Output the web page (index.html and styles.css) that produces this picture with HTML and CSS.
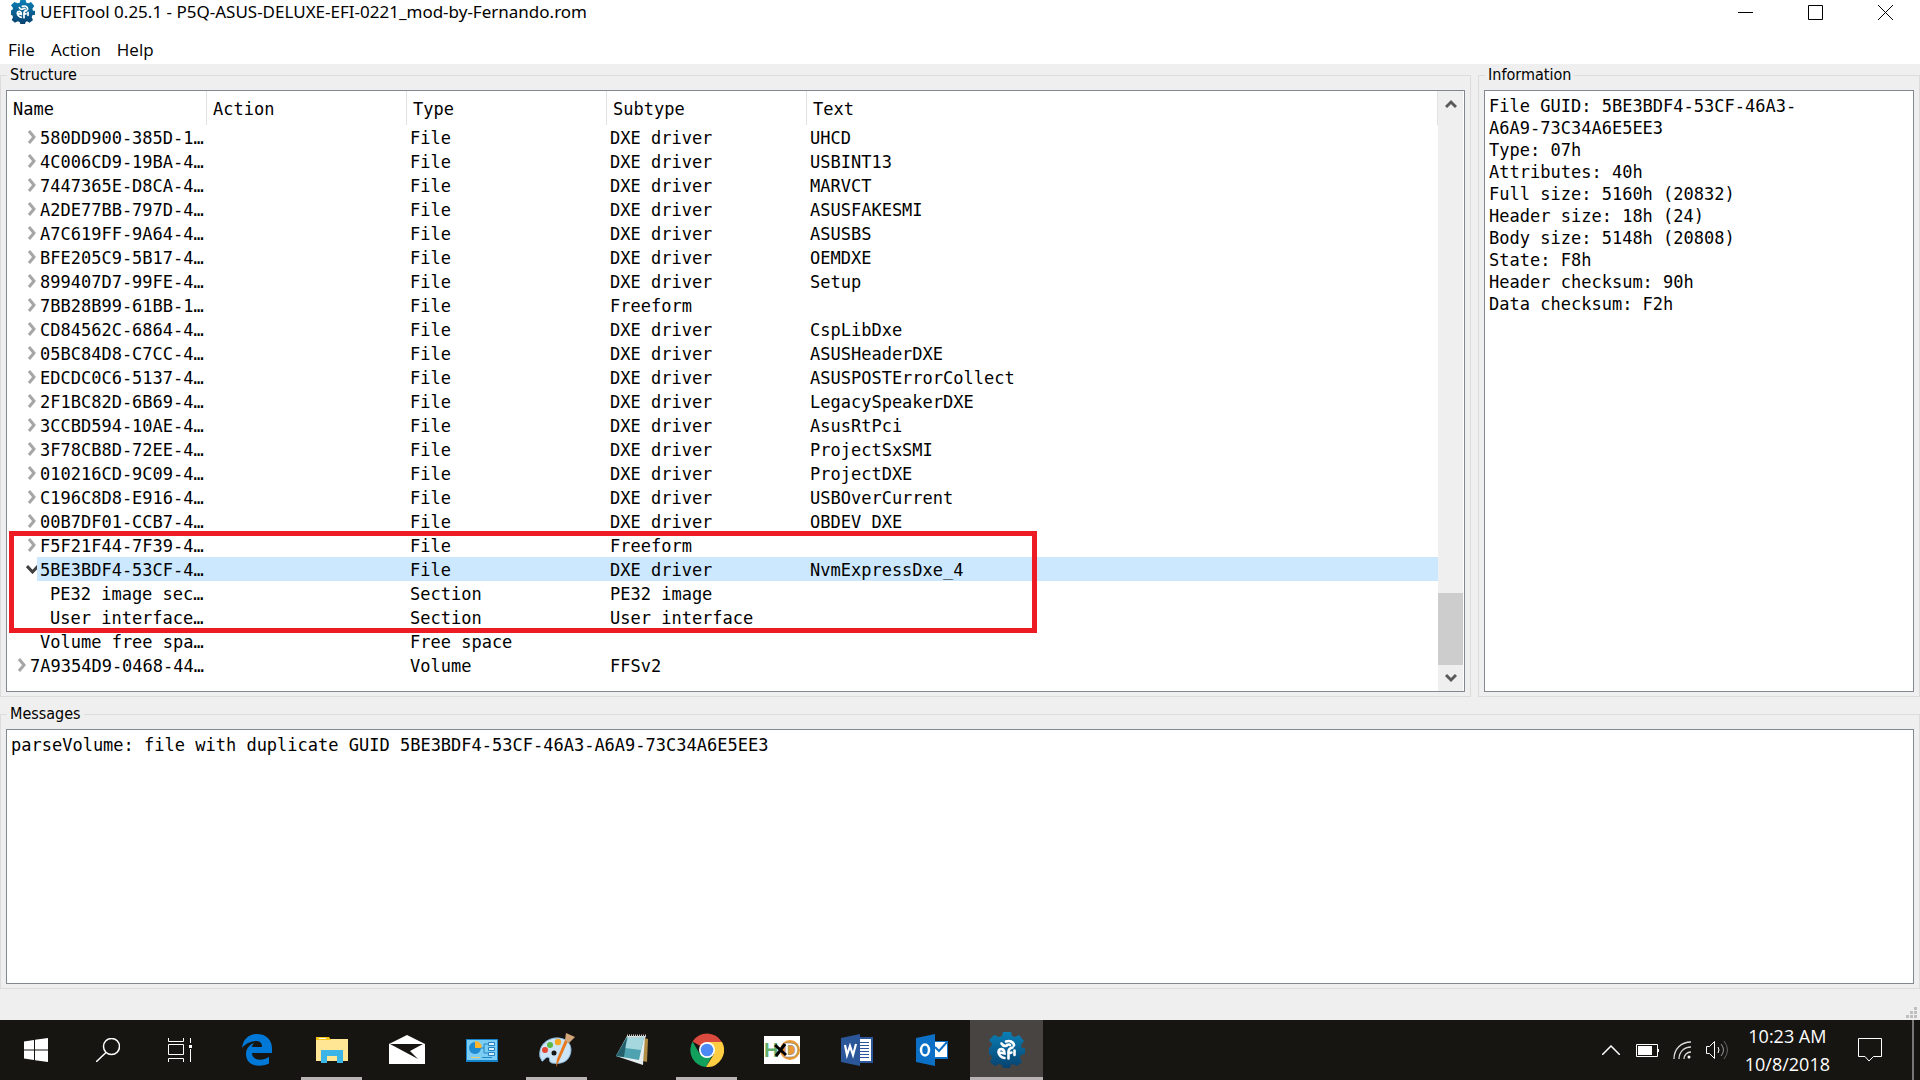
FILE: index.html
```html
<!DOCTYPE html>
<html lang="en">
<head>
<meta charset="utf-8">
<title>UEFITool 0.25.1</title>
<link rel="stylesheet" href="styles.css">
</head>
<body>
<svg class="defs" aria-hidden="true">
  <defs>
    <linearGradient id="gearFill" x1="0" y1="0" x2="0" y2="1"><stop offset="0" stop-color="#0a7fb5"/><stop offset="1" stop-color="#07426f"/></linearGradient>
    <symbol id="gear" viewBox="0 0 36 36">
      <path fill="url(#gearFill)" d="M14 0h8l1 4 3 1 4-2 5 6-3 4 1 3 3 0v6l-4 1-1 3 2 4-5 4-4-2-2 1-1 3h-7l-1-3-3-1-4 2-5-4 2-4-1-3-4-1v-6l4-1 1-3-3-4 5-5 5 2 3-1z"/>
      <path fill="none" stroke="#fff" stroke-width="2.600" stroke-linecap="round" d="M12.500 11.500q2 3.500 5.500 2M17 9.500q3-1 5 0 3 1.500 3 4M18 13q2-1 3 0M10.500 20.500l5 1q0-4-3-4.500-3 0-3 3.500 1 4.500 6 5.500M19.500 26.500v-7q0-3 4-4M19.500 21.500l3-1M25.500 18.500v4.500"/>
    </symbol>
    <symbol id="chev" viewBox="0 0 10 14"><path d="M2 1l5 6-5 6" fill="none" stroke="#a6a6a6" stroke-width="3"/></symbol>
  </defs>
</svg>

<header class="titlebar">
  <svg class="app-icon"><use href="#gear"/></svg>
  <h1 class="title">UEFITool 0.25.1 - P5Q-ASUS-DELUXE-EFI-0221_mod-by-Fernando.rom</h1>
  <div class="window-buttons">
    <button aria-label="Minimize"><svg width="15" height="15"><path d="M0 7.500h15" stroke="#000"/></svg></button>
    <button aria-label="Maximize"><svg width="15" height="15"><path d="M.5.5h14v14H.5z" fill="none" stroke="#000"/></svg></button>
    <button aria-label="Close"><svg width="15" height="15"><path d="M0 0l15 15M15 0L0 15" stroke="#000"/></svg></button>
  </div>
</header>
<nav class="menubar">
  <button>File</button><button>Action</button><button>Help</button>
</nav>

<main class="workspace">
  <fieldset class="group structure">
    <legend>Structure</legend>
    <div class="tree">
      <div class="tree-view">
        <table>
          <colgroup><col class="col-name"><col class="col"><col class="col"><col class="col"><col></colgroup>
          <thead><tr><th>Name</th><th>Action</th><th>Type</th><th>Subtype</th><th>Text</th></tr></thead>
          <tbody id="rows"></tbody>
        </table>
        <div class="marker"></div>
      </div>
      <div class="scrollbar">
        <button aria-label="Scroll up"><svg width="12" height="10"><path d="M1 8l5-5 5 5" fill="none" stroke="#5a5a5a" stroke-width="3"/></svg></button>
        <div class="track"><div class="thumb"></div></div>
        <button aria-label="Scroll down"><svg width="12" height="10"><path d="M1 2l5 5 5-5" fill="none" stroke="#5a5a5a" stroke-width="3"/></svg></button>
      </div>
    </div>
  </fieldset>

  <fieldset class="group">
    <legend>Information</legend>
    <textarea class="output" readonly aria-label="Information">File GUID: 5BE3BDF4-53CF-46A3-
A6A9-73C34A6E5EE3
Type: 07h
Attributes: 40h
Full size: 5160h (20832)
Header size: 18h (24)
Body size: 5148h (20808)
State: F8h
Header checksum: 90h
Data checksum: F2h</textarea>
  </fieldset>

  <fieldset class="group messages">
    <legend>Messages</legend>
    <textarea class="output" readonly aria-label="Messages">parseVolume: file with duplicate GUID 5BE3BDF4-53CF-46A3-A6A9-73C34A6E5EE3</textarea>
  </fieldset>
</main>

<div class="statusbar">
  <svg width="11" height="11" fill="#bfbfbf"><path d="M8 0h3v3H8zM4 4h3v3H4zM8 4h3v3H8zM0 8h3v3H0zM4 8h3v3H4zM8 8h3v3H8z"/></svg>
</div>

<footer class="taskbar">
  <div class="system">
    <button aria-label="Start"><svg width="24" height="24" fill="#fff"><path d="M0 3.500L10 2v9.500H0zM11 1.800L24 0v11.500H11zM0 12.500h10V22L0 20.600zM11 12.500h13V24l-13-1.800z"/></svg></button>
    <button aria-label="Search"><svg width="24" height="24" fill="none" stroke="#fff" stroke-width="1.500"><circle cx="15.500" cy="8.500" r="8"/><path d="M10 14.500L0 24"/></svg></button>
    <button aria-label="Task View"><svg width="24" height="24" fill="none" stroke="#fff"><path d="M.5 0v3.500h15V0M.5 6.500h15v10H.5zM.5 24v-3.500h15V24M22.500 0v5M22.500 11v13"/><path d="M21 7h3v3h-3z" fill="#fff" stroke="none"/></svg></button>
  </div>
  <div class="apps">
    <button aria-label="Edge"><svg width="30" height="32" viewBox="0 0 30 32"><path fill="#0078d7" d="M0 14C1 5 7 0 15 0c9 0 15 6 15 14v5H10c0 8 11 8 17 4v6.500C17 34 4 32 4 20c0-5 3-9 8-11-1 1-2 3-2 4h10c0-4-2-6-6-6C9 7 3 10 0 14z"/></svg></button>
    <button class="open" aria-label="File Explorer"><svg width="32" height="28" viewBox="0 0 32 28"><path fill="#ffe694" d="M0 3h32v22H0z"/><path fill="#f6c21c" d="M0 1h13l2 3H0z"/><path fill="#fff" d="M3 2h7v1H3z"/><path fill="#3bb4e7" d="M5 14h22v13h-6v-7H11v7H5z"/></svg></button>
    <button aria-label="Mail"><svg width="36" height="30" viewBox="0 0 36 30"><path fill="#fff" d="M0 9L18 0l18 9v20H0z"/><path fill="#171511" d="M1 9h33L21 16l8 8z"/></svg></button>
    <button aria-label="Control Panel"><svg width="32" height="23" viewBox="0 0 32 23"><path fill="#1482c8" d="M0 0h32v23H0z"/><path fill="#7ccdf3" d="M1 1h30v20H1z"/><circle cx="9" cy="9" r="6" fill="#1e8bd2"/><path fill="#ffb52e" d="M9 9V2a7 7 0 017 7z"/><path stroke="#2387c4" fill="none" d="M15 9h3V5h4M18 9v5h4"/><path fill="#d3f1ff" stroke="#2580bd" d="M22.500 3.500h6v3h-6zM22.500 8.500h6v3h-6zM22.500 13.500h6v3h-6z"/><path stroke="#e7cf75" d="M5 18.500h9"/><path stroke="#2387c4" d="M16 18.500h10"/></svg></button>
    <button class="open" aria-label="Paint"><svg width="36" height="36" viewBox="0 0 36 36"><path fill="#cbe4f6" stroke="#8dbde0" d="M1 25C-1 13 9 5 20 6c10 1 14 9 11 17-3 8-10 9-18 8-4-1-1-5-4-6-4 1-5 5-6 4z"/><circle cx="15" cy="21" r="2.500" fill="#171511"/><circle cx="6" cy="18" r="3" fill="#e5482f"/><circle cx="11" cy="13" r="3" fill="#5cb845"/><circle cx="19" cy="10" r="3.200" fill="#f7a823"/><path d="M29 9L20 29l-3 6 1-8 8-19z" fill="#e77a1f"/><path fill="#d3a679" d="M26 8l1-7 9 4-6 6z"/></svg></button>
    <button aria-label="Notepad"><svg width="34" height="32" viewBox="0 0 34 32"><path fill="#b18c45" d="M29 4l4 1-1 23-4-1z"/><path fill="#e6eef0" d="M12 2h18l-2 29-27-9z"/><path fill="#4fa3b0" d="M12 3h17l-5 23-23-4z"/><path fill="#a5d7df" d="M13 3h16l-3 13-16-2z"/><path fill="#245f6b" d="M12 3L1 22l8 1z"/><path stroke="#ccc" stroke-width="3" stroke-dasharray="1 1" d="M12 2h19"/></svg></button>
    <button class="open" aria-label="Chrome"><svg width="34" height="34" viewBox="0 0 34 34"><path fill="#db4a3f" d="M17 17L2.600 8.500A17 17 0 0131.800 9L32 9z"/><path fill="#12a15d" d="M17 17l6 4-7 13A17 17 0 012.600 8.500l7.400 13z"/><path fill="#ffcd42" d="M17 9h15a17 17 0 01-16 25l8-13z"/><circle cx="17" cy="17" r="8" fill="#fff"/><circle cx="17" cy="17" r="6.300" fill="#4b8af5"/></svg></button>
    <button aria-label="HxD"><svg width="36" height="28" viewBox="0 0 36 28"><path fill="#fff" d="M0 0h36v28H0z"/><circle cx="26" cy="14" r="10" fill="#e99a35"/><text class="hxd-text" x="0" y="21" fill="#62ad6c">H</text><text class="hxd-text" x="20" y="21" fill="#fff" stroke="#777" stroke-width=".5">D</text><path stroke="#000" stroke-width="3" d="M11 9l11 10M21 8l-9 12"/></svg></button>
    <button aria-label="Word"><svg width="32" height="32" viewBox="0 0 32 32"><path fill="#2b569a" d="M17 3h15v26H17z"/><path fill="#fff" d="M18 5h12v22H18z"/><path stroke="#2b569a" d="M18 8.500h10M18 11.500h10M18 14.500h10M18 17.500h10M18 20.500h10M18 23.500h10"/><path fill="#2b569a" d="M0 4l19-4v32L0 28z"/><path fill="none" stroke="#fff" stroke-width="2.200" d="M4 11l2 10 3-9 3 9 3-11"/></svg></button>
    <button aria-label="Outlook"><svg width="32" height="32" viewBox="0 0 32 32"><path fill="#0b70c6" d="M17 7h15v18H17z"/><path fill="#fff" d="M18 8h13v15H18z"/><path fill="none" stroke="#0b70c6" stroke-width="2" d="M19 13l4 4 8-9"/><path fill="#0b70c6" d="M0 4l19-4v32L0 28z"/><ellipse cx="9" cy="16" rx="4" ry="5.500" fill="none" stroke="#fff" stroke-width="2.500"/></svg></button>
    <button class="open current" aria-label="UEFITool"><svg width="36" height="36"><use href="#gear"/></svg></button>
  </div>
  <div class="tray">
    <button class="overflow" aria-label="Show hidden icons"><svg width="18" height="10"><path d="M0 10l9-9 9 9" fill="none" stroke="#fff" stroke-width="1.500"/></svg></button>
    <button aria-label="Battery"><svg width="23" height="13"><path d="M.5.5h21v12H.5z" fill="none" stroke="#fff"/><path d="M2 2h14v9H2zM22 5h1v3h-1z" fill="#fff"/></svg></button>
    <button aria-label="Network"><svg width="19" height="18" fill="none" stroke="#ddd" stroke-width="1.300"><path d="M1 18C1 8 8 1 18 1M6 18C6 11 11 6 18 6M11 18c0-4 3-7 7-7"/><circle cx="16" cy="16" r="1.500" fill="#fff" stroke="none"/></svg></button>
    <button aria-label="Volume"><svg width="23" height="18" fill="none" stroke="#fff"><path d="M.5 5.500h3l5-5v17l-5-5h-3z"/><path d="M12 6q2 3 0 6"/><path stroke="#999" d="M15 3q5 6 0 12"/><path stroke="#666" d="M18 0q7 9 0 18"/></svg></button>
    <button class="clock"><span>10:23 AM</span><span>10/8/2018</span></button>
    <button class="notifications" aria-label="Notifications"><svg width="24" height="24"><path d="M.5.5h23v18h-8L11 23l-4-4.500H.5z" fill="none" stroke="#fff"/></svg></button>
    <button class="show-desktop" aria-label="Show desktop"></button>
  </div>
</footer>
<script src="rows.js"></script>
</body>
</html>
```
FILE: styles.css
```css
* { box-sizing: border-box; }

body {
  margin: 0;
  height: 100vh;
  display: flex;
  flex-direction: column;
  background: #efefef;
  color: #000;
  font: 17px/24px "Open Sans", "Noto Sans", sans-serif;
  overflow: hidden;
}

button {
  margin: 0;
  padding: 0;
  border: 0;
  background: none;
  color: inherit;
  font: inherit;
}

svg { display: block; }
.defs { position: absolute; width: 0; height: 0; }

.titlebar {
  display: flex;
  align-items: center;
  height: 24px;
  padding-left: 11px;
  background: #fff;
}
.app-icon { width: 24px; height: 24px; }
.title {
  margin: 0 0 0 5px;
  font: 400 17px/24px "Noto Sans", "Open Sans", sans-serif;
  white-space: nowrap;
}
.window-buttons { display: flex; margin-left: auto; }
.window-buttons button { display: grid; place-items: center; width: 70px; height: 24px; }

.menubar {
  display: flex;
  gap: 16px;
  padding: 12px 8px 0;
  line-height: 28px;
  background: #fff;
}

.workspace {
  flex: 1;
  min-height: 0;
  display: grid;
  grid-template: minmax(0, 689fr) minmax(0, 311fr) / minmax(0, 769fr) minmax(0, 231fr);
  gap: 6px 7px;
}
.group {
  display: flex;
  min-width: 0;
  min-height: 0;
  height: 100%;
  margin: 0;
  padding: 4px 5px;
  border: 1px solid #dcdcdc;
}
.group legend {
  margin-left: 1px;
  padding: 0 3px;
  font: 16px/22px "DejaVu Sans Condensed", "DejaVu Sans", sans-serif;
}
.messages { grid-column: 1 / -1; }

.output, .tree {
  flex: 1;
  min-width: 0;
  height: 100%;
  border: 1px solid #828790;
  background: #fff;
  font: 17px/22px "DejaVu Sans Mono", "Liberation Mono", monospace;
}
.output {
  padding: 4px;
  color: #000;
  resize: none;
  outline: 0;
}
.tree { display: flex; padding-right: 1px; }
.tree-view { position: relative; flex: 1; min-width: 0; overflow: hidden; }

table { width: 100%; table-layout: fixed; border-collapse: separate; border-spacing: 0; }
.col-name, .col { width: 200px; }
th {
  height: 34px;
  padding: 2px 6px 0;
  border-right: 1px solid #e2e2e2;
  font-weight: 400;
  text-align: left;
}
td { height: 24px; padding: 2px 3px 0; white-space: nowrap; }
td:first-child { padding: 0; }
.name { display: flex; padding-left: 19px; }
.level-1 .name { padding-left: 9px; }
.level-3 .name { padding-left: 29px; }
.toggle { display: grid; place-items: center; flex: none; width: 11px; height: 24px; }
.label { flex: 1; padding: 2px 0 0 3px; }
.selected td:not(:first-child), .selected .label { background: #cce8ff; }

.marker {
  position: absolute;
  left: 2px;
  top: 440px;
  width: 1028px;
  height: 102px;
  border: 5px solid #ed1c24;
}

.scrollbar { display: flex; flex-direction: column; width: 25px; background: #efefef; }
.scrollbar button { display: grid; place-items: center; height: 26px; }
.track { flex: 1; display: flex; flex-direction: column; justify-content: flex-end; }
.thumb { height: 72px; background: #cdcdcd; }

.statusbar { display: flex; justify-content: flex-end; align-items: flex-end; height: 31px; padding: 2px 3px; }

.taskbar { display: flex; height: 60px; background: #171511; color: #fff; }
.taskbar button { display: grid; place-items: center; height: 60px; }
.system { display: flex; }
.system button { width: 72px; }
.apps { display: flex; gap: 2px; margin-left: 4px; }
.apps button { position: relative; width: 73px; }
.apps .open::after {
  content: "";
  position: absolute;
  inset: auto 6px 0;
  height: 3px;
  background: #b9b3b6;
}
.apps .current { background: #474441; }
.apps .current::after { inset: auto 0 0; }
.hxd-text { font: 700 20px "Liberation Sans", sans-serif; }

.tray { display: flex; gap: 14px; margin-left: auto; }
.tray .overflow { margin-right: 2px; }
.taskbar .clock { align-content: center; margin-left: 2px; font-size: 18px; line-height: 28px; }
.taskbar .notifications { margin-left: 14px; }
.taskbar .show-desktop { width: 8px; margin-left: 16px; border-left: 2px solid #777; }
```
FILE: rows.js
```js
// Firmware tree: [level, state, name, type, subtype, text]
const rows = [
  [2, "closed", "580DD900-385D-1…", "File", "DXE driver", "UHCD"],
  [2, "closed", "4C006CD9-19BA-4…", "File", "DXE driver", "USBINT13"],
  [2, "closed", "7447365E-D8CA-4…", "File", "DXE driver", "MARVCT"],
  [2, "closed", "A2DE77BB-797D-4…", "File", "DXE driver", "ASUSFAKESMI"],
  [2, "closed", "A7C619FF-9A64-4…", "File", "DXE driver", "ASUSBS"],
  [2, "closed", "BFE205C9-5B17-4…", "File", "DXE driver", "OEMDXE"],
  [2, "closed", "899407D7-99FE-4…", "File", "DXE driver", "Setup"],
  [2, "closed", "7BB28B99-61BB-1…", "File", "Freeform", ""],
  [2, "closed", "CD84562C-6864-4…", "File", "DXE driver", "CspLibDxe"],
  [2, "closed", "05BC84D8-C7CC-4…", "File", "DXE driver", "ASUSHeaderDXE"],
  [2, "closed", "EDCDC0C6-5137-4…", "File", "DXE driver", "ASUSPOSTErrorCollect"],
  [2, "closed", "2F1BC82D-6B69-4…", "File", "DXE driver", "LegacySpeakerDXE"],
  [2, "closed", "3CCBD594-10AE-4…", "File", "DXE driver", "AsusRtPci"],
  [2, "closed", "3F78CB8D-72EE-4…", "File", "DXE driver", "ProjectSxSMI"],
  [2, "closed", "010216CD-9C09-4…", "File", "DXE driver", "ProjectDXE"],
  [2, "closed", "C196C8D8-E916-4…", "File", "DXE driver", "USBOverCurrent"],
  [2, "closed", "00B7DF01-CCB7-4…", "File", "DXE driver", "OBDEV_DXE"],
  [2, "closed", "F5F21F44-7F39-4…", "File", "Freeform", ""],
  [2, "open", "5BE3BDF4-53CF-4…", "File", "DXE driver", "NvmExpressDxe_4"],
  [3, "leaf", "PE32 image sec…", "Section", "PE32 image", ""],
  [3, "leaf", "User interface…", "Section", "User interface", ""],
  [2, "leaf", "Volume free spa…", "Free space", "", ""],
  [1, "closed", "7A9354D9-0468-44…", "Volume", "FFSv2", ""]
];

const toggles = {
  closed: '<button class="toggle" aria-label="Expand"><svg width="10" height="14"><use href="#chev"/></svg></button>',
  open: '<button class="toggle" aria-label="Collapse"><svg width="13" height="10"><path d="M1 2l5.500 6L12 2" fill="none" stroke="#404040" stroke-width="3"/></svg></button>',
  leaf: '<span class="toggle"></span>'
};

document.getElementById("rows").innerHTML = rows.map(([level, state, name, ...cells]) =>
  `<tr class="level-${level}${state === "open" ? " selected" : ""}">` +
  `<td><div class="name">${toggles[state]}<span class="label">${name}</span></div></td>` +
  `<td></td>` + cells.map(text => `<td>${text}</td>`).join("") + `</tr>`
).join("");
```
